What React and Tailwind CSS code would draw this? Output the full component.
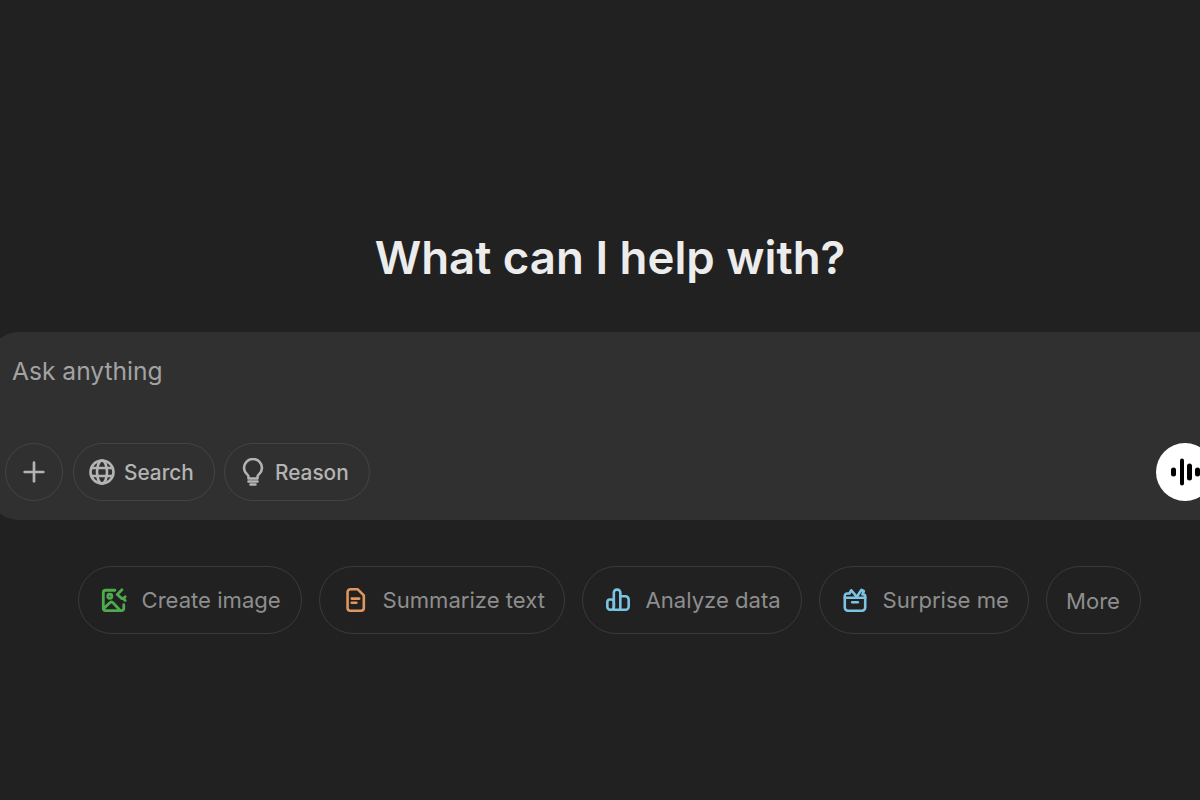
import React from 'react';
import { Plus } from 'lucide-react';

const GlobeIcon = () => (
  <svg width="28" height="28" viewBox="0 0 28 28" fill="none" stroke="currentColor" strokeWidth="2.600" strokeLinecap="round">
    <circle cx="14" cy="14" r="11.500" />
    <ellipse cx="14" cy="14" rx="5" ry="11.500" />
    <path d="M3.500 10h21M3.500 18h21" />
  </svg>
);

const BulbIcon = () => (
  <svg width="28" height="28" viewBox="0 0 28 28" fill="none" stroke="currentColor" strokeWidth="2.600" strokeLinecap="round" strokeLinejoin="round">
    <path d="M9.500 20.500v-1.800c0-1-.6-1.700-1.800-2.800A9 9 0 0 1 5 10a9 9 0 0 1 18 0 9 9 0 0 1-2.700 5.900c-1.200 1.100-1.800 1.800-1.800 2.800v1.800z" />
    <path d="M9.500 23.500h9M11.500 26.500h5" />
  </svg>
);

const ImageIcon = () => (
  <svg width="26" height="26" viewBox="0 0 28 28" fill="none" stroke="#4fa94d" strokeWidth="3" strokeLinecap="round" strokeLinejoin="round">
    <path d="M15 3.500H5a2.500 2.500 0 0 0-2.500 2.500v17A2.500 2.500 0 0 0 5 25.500h17a2.500 2.500 0 0 0 2.500-2.500v-4" />
    <circle cx="9.500" cy="10" r="2.200" />
    <path d="M3 23l6.500-6a2.500 2.500 0 0 1 3.400 0l7.100 7.500" />
    <path d="M22.500 3l-5 5 5 4.500M26 10.500l-2 2 2 2" />
  </svg>
);

const DocIcon = () => (
  <svg width="26" height="26" viewBox="0 0 28 28" fill="none" stroke="#e2955c" strokeWidth="2.800" strokeLinecap="round" strokeLinejoin="round">
    <path d="M9 2.500h8L23.500 9v13.500a3 3 0 0 1-3 3H9a3 3 0 0 1-3-3v-17a3 3 0 0 1 3-3z" />
    <path d="M10.500 12.500h8M10.500 17h5" />
  </svg>
);

const ChartIcon = () => (
  <svg width="26" height="26" viewBox="0 0 28 28" fill="none" stroke="#7cc4e4" strokeWidth="2.800" strokeLinecap="round" strokeLinejoin="round">
    <rect x="2.500" y="13.500" width="7" height="11" rx="3" />
    <path d="M9.500 24.500V6a3.200 3.200 0 0 1 3.200-3.200h.6A3.200 3.200 0 0 1 16.500 6v18.500z" />
    <path d="M16.500 10H22a3.500 3.500 0 0 1 3.500 3.500v7.500a3.500 3.500 0 0 1-3.500 3.500h-5.500" />
  </svg>
);

const BoxIcon = () => (
  <svg width="26" height="26" viewBox="0 0 28 28" fill="none" stroke="#7cc4e4" strokeWidth="2.800" strokeLinecap="round" strokeLinejoin="round">
    <path d="M3 11.500h22V22a3.500 3.500 0 0 1-3.500 3.500h-15A3.500 3.500 0 0 1 3 22z" />
    <path d="M3 11.500V9.500a2.500 2.500 0 0 1 2.500-2.500H8l2-3.500 3 3.500 3 4" />
    <path d="M16 10.500l5-7.500 2.500 1.500-1.500 3.500h1a2 2 0 0 1 2 2v1.500" />
    <path d="M11 16.500h6" />
  </svg>
);

const WaveIcon = () => (
  <svg width="32" height="32" viewBox="0 0 32 32" fill="#000">
    <rect x="2" y="11.500" width="5" height="9" rx="2.500" />
    <rect x="11" y="2.500" width="4" height="27" rx="2" />
    <rect x="18" y="7.500" width="5" height="17" rx="2.500" />
    <rect x="26" y="11.500" width="5" height="9" rx="2.500" />
  </svg>
);

const tools = [
  { Icon: GlobeIcon, label: 'Search', cls: 'w-[142px]' },
  { Icon: BulbIcon, label: 'Reason', cls: 'w-[146px]' },
];

const suggestions = [
  { Icon: ImageIcon, label: 'Create image', cls: 'w-[224px]' },
  { Icon: DocIcon, label: 'Summarize text', cls: 'w-[246px]' },
  { Icon: ChartIcon, label: 'Analyze data', cls: 'w-[220px]' },
  { Icon: BoxIcon, label: 'Surprise me', cls: 'w-[210px]' },
];

export default function App() {
  return (
    <div className="h-[800px] w-[1200px] overflow-hidden bg-[#212121] font-['Inter',sans-serif]">
      <div className="-ml-[10px] flex w-[1240px] flex-col items-center pt-[230px]">
        <h1 className="text-[45.6px] leading-[56px] font-semibold text-[#ececec]">What can I help with?</h1>

        <div className="mt-[46px] flex h-[188px] w-full flex-col justify-between rounded-[28px] bg-[#303030] px-4 pt-[21px] pb-[19px]">
          <p className="pl-[6px] text-[24.6px] leading-[36px] text-[#a3a3a3]">Ask anything</p>
          <div className="flex items-center">
            <button className="-ml-[1px] flex h-[58px] w-[58px] items-center justify-center rounded-full border-[1.5px] border-[#444444] text-[#b4b4b4]">
              <Plus size={32} strokeWidth={2} />
            </button>
            <div className="ml-[10px] flex gap-[9px]">
              {tools.map(({ Icon, label, cls }) => (
                <button key={label} className={`flex h-[58px] items-center gap-[8px] rounded-full border-[1.5px] border-[#444444] pl-[14px] text-[20.8px] leading-[28px] font-medium text-[#b4b4b4] ${cls}`}>
                  <Icon />
                  <span className="translate-y-[1px]">{label}</span>
                </button>
              ))}
            </div>
            <button className="ml-auto flex h-[58px] w-[58px] items-center justify-center rounded-full bg-white">
              <WaveIcon />
            </button>
          </div>
        </div>

        <div className="mt-[46px] flex gap-[17px] pr-[2px]">
          {suggestions.map(({ Icon, label, cls }) => (
            <button key={label} className={`flex h-[68px] items-center gap-[15px] rounded-full border-[1.5px] border-[#3a3a3a] pl-[22px] text-[22.1px] leading-[30px] text-[#8e8e8e] ${cls}`}>
              <Icon />
              <span>{label}</span>
            </button>
          ))}
          <button className="flex h-[68px] w-[95px] items-center justify-center rounded-full border-[1.5px] border-[#3a3a3a] text-[22.1px] leading-[30px] text-[#8e8e8e]">
            <span className="translate-y-[1px]">More</span>
          </button>
        </div>
      </div>
    </div>
  );
}
